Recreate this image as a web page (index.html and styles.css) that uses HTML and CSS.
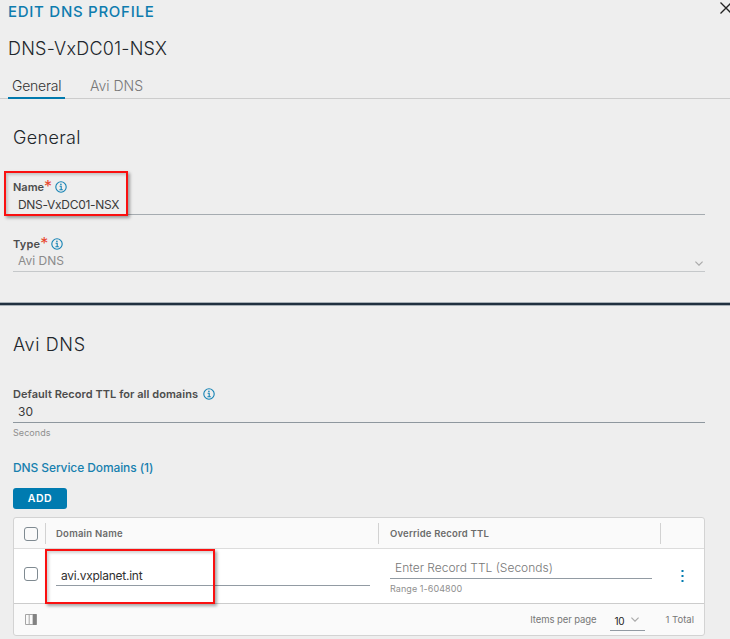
FILE: index.html
```html
<!DOCTYPE html>
<html lang="en">
<head>
<meta charset="utf-8">
<title>Edit DNS Profile</title>
<link rel="stylesheet" href="styles.css">
</head>
<body>
<svg class="defs" aria-hidden="true">
  <symbol id="info" viewBox="0 0 12 12"><circle cx="6" cy="6" r="5.2" fill="none" stroke="currentColor" stroke-width="1.1"/><circle cx="5.9" cy="3.4" r=".8" fill="currentColor"/><path d="M4.6 5.3h1.6v3.3M4.4 8.8h3.4" fill="none" stroke="currentColor" stroke-width="1.1"/></symbol>
  <symbol id="chevron" viewBox="0 0 8 5"><path d="M.4.6 4 4.2 7.6.6" fill="none" stroke="currentColor" stroke-width="1.2"/></symbol>
</svg>
<main class="dialog">
  <header class="top">
    <h1 class="title"><span>EDIT DNS PROFILE</span></h1>
    <svg class="close" viewBox="0 0 12 12"><path d="M.5.5 11.5 11.5M11.5.5.5 11.5" fill="none" stroke="currentColor" stroke-width="1.3"/></svg>
  </header>
  <h2 class="profile"><span>DNS-VxDC01-NSX</span></h2>
  <nav class="tabs">
    <a class="tab active"><span>General</span></a>
    <a class="tab"><span>Avi DNS</span></a>
  </nav>
  <section class="section">
    <h3 class="heading"><span class="h-general">General</span></h3>
    <div class="field name">
      <label class="label"><span class="l-name">Name</span><b class="req">*</b><svg class="info"><use href="#info"/></svg></label>
      <div class="value"><span class="v-name">DNS-VxDC01-NSX</span></div>
      <i class="mark mark-name"></i>
    </div>
    <div class="field type">
      <label class="label"><span class="l-type">Type</span><b class="req">*</b><svg class="info"><use href="#info"/></svg></label>
      <div class="value disabled"><span class="v-type">Avi DNS</span><svg class="chevron"><use href="#chevron"/></svg></div>
    </div>
  </section>
  <hr class="divider">
  <section class="section">
    <h3 class="heading"><span class="h-avi">Avi DNS</span></h3>
    <div class="field ttl">
      <label class="label"><span class="l-ttl">Default Record TTL for all domains</span><svg class="info"><use href="#info"/></svg></label>
      <div class="value"><span class="v-ttl">30</span></div>
      <div class="hint"><span>Seconds</span></div>
    </div>
    <h4 class="domains"><span>DNS Service Domains (1)</span></h4>
    <button class="add"><span>ADD</span></button>
    <div class="table">
      <div class="row head">
        <div class="cell check"><i class="box"></i></div>
        <div class="cell"><span class="th-domain">Domain Name</span></div>
        <div class="cell th-override"><span class="th-ttl">Override Record TTL</span></div>
        <div class="cell"></div>
      </div>
      <div class="row data">
        <div class="cell check"><i class="box"></i></div>
        <div class="cell domain"><div class="input"><span>avi.vxplanet.int</span></div></div>
        <div class="cell override"><div class="input"><span>Enter Record TTL (Seconds)</span></div><div class="range"><span>Range 1-604800</span></div></div>
        <div class="cell actions"><svg class="dots" viewBox="0 0 3 12"><path d="M.5 0h2v2h-2zM.5 5h2v2h-2zM.5 10h2v2h-2z" fill="currentColor"/></svg></div>
        <i class="mark mark-domain"></i>
      </div>
      <footer class="foot">
        <svg class="columns" viewBox="0 0 12 11"><path d="M.5.5h11v10H.5zM4.2.5v10M8 .5v10" fill="none" stroke="currentColor"/><path class="fill" d="M8 0h3.5v11H8z"/></svg>
        <span class="per">Items per page</span>
        <div class="pager"><span>10</span><svg class="chevron"><use href="#chevron"/></svg></div>
        <span class="total">1 Total</span>
      </footer>
    </div>
  </section>
</main>
</body>
</html>
```
FILE: styles.css
```css
* { box-sizing: border-box; }
body { margin: 0; background: #eee; color: #21262b; font-family: Inter, "Open Sans", sans-serif; overflow: hidden; }
h1, h2, h3, h4 { margin: 0; font-weight: 300; }
span { white-space: nowrap; }
.defs { position: absolute; width: 0; height: 0; }
.dialog { height: 639px; }
.top { display: flex; justify-content: space-between; height: 23px; padding-left: 8px; }
.title { font-size: 15px; line-height: 23px; font-weight: 500; color: #0e7cae; letter-spacing: .72px; }
.close { width: 12px; height: 12px; margin: 2px -2px 0 0; color: #222; }
.profile { padding-left: 8px; font-size: 18px; line-height: 51px; letter-spacing: .22px; }
.tabs { display: flex; gap: 21px; height: 25px; padding-left: 8px; border-bottom: 1px solid #ccc; }
.tab { height: 25px; padding: 0 4px; font-size: 14px; line-height: 24px; font-weight: 300; color: #777; }
.tab.active { width: 57px; color: #333; letter-spacing: -.22px; border-bottom: 2px solid #0079ad; }
.section { padding: 0 25px 0 13px; }
.heading { font-size: 18px; line-height: 78px; }
.h-general { letter-spacing: .35px; }
.h-avi { letter-spacing: .65px; }
.field { position: relative; }
.type { margin-top: 19px; }
.label { display: flex; align-items: center; height: 20px; font-size: 11px; font-weight: 600; color: #4c4c4c; }
.l-type { letter-spacing: .2px; }
.l-ttl { letter-spacing: .05px; }
.req { align-self: flex-start; width: 8px; font-size: 16px; line-height: 18px; font-weight: 400; color: #e8452c; }
.info { width: 12px; height: 12px; margin-left: 3px; color: #1583b5; }
.ttl .info { margin-left: 5px; }
.value { display: flex; justify-content: space-between; height: 18px; padding: 0 2px 0 5px; border-bottom: 1px solid #a5abb0; font-size: 12px; line-height: 15px; font-weight: 400; color: #3a3a3a; }
.v-name { letter-spacing: -.3px; }
.disabled { line-height: 14px; color: #8b8b8b; border-color: #c5c8ca; }
.ttl .value { height: 19px; border-color: #8e979e; }
.chevron { width: 8px; height: 5px; color: #aaa; }
.disabled .chevron { margin-top: 7px; }
.hint { font-size: 9px; line-height: 20px; color: #8f8f8f; letter-spacing: .07px; }
.divider { height: 4px; margin: 30px 0 0; border: solid #a8b0b6; border-width: 1px 0; background: #20303f; }
.domains { margin-top: 16px; font-size: 12px; line-height: 18px; font-weight: 500; color: #1780ae; letter-spacing: -.1px; }
.add { display: block; width: 54px; height: 21px; margin-top: 11px; padding: 0; border: 0; border-radius: 3px; background: #007bb0; color: #fff; font: 600 10.5px/20px Inter, sans-serif; letter-spacing: .5px; }
.table { height: 119px; margin-top: 8px; border: 1px solid #d3d3d3; border-radius: 3px; background: #fafafa; }
.row { display: grid; grid-template-columns: 32px 333px 282px 1fr; position: relative; }
.head { height: 31px; border-bottom: 1px solid #dcdcdc; }
.head .cell { height: 21px; margin-top: 5px; padding-left: 10px; border-right: 1px solid #d2d2d2; font-size: 9.5px; line-height: 21px; font-weight: 600; color: #6b6b6b; letter-spacing: .24px; }
.head .th-override { padding-left: 11px; letter-spacing: .2px; }
.head .cell:last-child { border: 0; }
.box { display: block; width: 14px; height: 14px; border: 1px solid #7f8a91; border-radius: 3px; background: #fff; }
.head .box { margin-top: 4px; background: #fafafa; }
.data { height: 55px; background: #fff; border-bottom: 1px solid #ccc; }
.data .check { padding: 18px 0 0 10px; }
.input { border-bottom: 1px solid #929ba3; padding-left: 5px; font-size: 12px; }
.domain { padding: 16px 9px 0 10px; }
.domain .input { height: 21px; line-height: 22px; color: #303030; letter-spacing: -.25px; }
.override { padding: 10px 9px 0 11px; }
.override .input { height: 20px; line-height: 18px; font-weight: 300; color: #777; }
.range { font-size: 9px; line-height: 20px; color: #8f8f8f; letter-spacing: .07px; }
.actions { padding: 21px 0 0 20px; }
.dots { display: block; width: 3px; height: 12px; color: #007bb0; }
.foot { display: flex; align-items: center; height: 31px; padding: 0 10px 0 11px; font-size: 9.5px; color: #777; }
.columns { width: 12px; height: 11px; color: #a5a5a5; }
.columns .fill { fill: #828282; }
.per { margin-left: auto; letter-spacing: -.08px; }
.pager { display: flex; gap: 7px; width: 35px; height: 20px; margin: 3px 21px 0 13px; padding-left: 5px; border-bottom: 1px solid #929ba3; font-size: 10px; line-height: 20px; color: #222; letter-spacing: -.4px; }
.pager .chevron { margin-top: 6px; flex: none; }
.mark { position: absolute; border: 2px solid #fa1010; box-shadow: 2px 2px 3px rgba(0,0,0,.35), inset 2px 2px 3px rgba(0,0,0,.18); }
.mark-name { left: -9px; top: -6px; width: 124px; height: 45px; }
.mark-domain { left: 31px; top: 0; width: 170px; height: 55px; }
```
